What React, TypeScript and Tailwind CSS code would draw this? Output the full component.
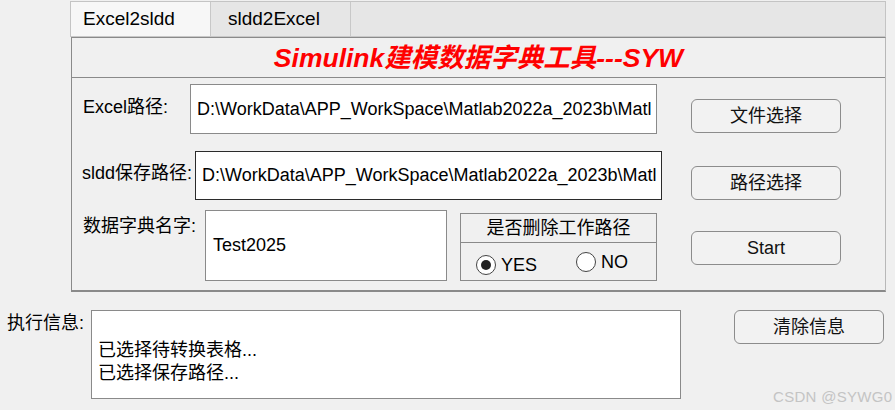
import React from "react";

const F = { fontFamily: '"Liberation Sans", "Noto Sans CJK SC", sans-serif' };

function Btn({ children, className = "" }: { children: React.ReactNode; className?: string }) {
  return (
    <div
      className={
        "w-[150px] flex items-center justify-center rounded-[6px] border border-[#8c8c8c] bg-[#f2f2f2] text-[18px] text-[#111] " +
        className
      }
    >
      {children}
    </div>
  );
}

function Field({ children, className = "" }: { children: React.ReactNode; className?: string }) {
  return (
    <div
      className={
        "bg-white flex items-center overflow-hidden whitespace-nowrap text-[18px] text-black " + className
      }
    >
      {children}
    </div>
  );
}

export default function App() {
  return (
    <div className="w-[895px] h-[410px] bg-[#f0f0f0] relative overflow-hidden text-black" style={F}>
      {/* Tab group */}
      <div className="ml-[70px] pt-[1px] w-[816px]">
        <div className="h-[36px] bg-[#e6e6e6] border-t border-l border-r border-[#c4c4c4] flex border-b border-b-[#c8c8c8]">
          <div className="w-[140px] h-full bg-[#f7f7f7] border-r border-[#c8c8c8] flex items-center pl-[12px] text-[19px]">
            Excel2sldd
          </div>
          <div className="w-[140px] h-full border-r border-[#c8c8c8] flex items-center pl-[17px] text-[19px]">
            sldd2Excel
          </div>
        </div>
        <div className="h-[255px] border-t border-l border-b-2 border-[#8a8a8a] border-r border-r-[#b8b8b8] ml-[1px]">
          <div className="h-[40px] border-b border-[#8a8a8a] flex items-center justify-center">
            <span className="text-[#ff0000] font-bold italic text-[26.5px] leading-[30px]">
              Simulink建模数据字典工具---SYW
            </span>
          </div>
          {/* Row 1 */}
          <div className="flex items-start mt-[6px]">
            <div className="w-[118px] pl-[11px] pt-[13px] text-[18px] leading-[20px]">Excel路径:</div>
            <Field className="w-[467px] h-[50px] border border-[#8a8a8a] pl-[6px]">
              D:\WorkData\APP_WorkSpace\Matlab2022a_2023b\Matl
            </Field>
            <Btn className="ml-[34px] mt-[15px] h-[34px]">文件选择</Btn>
          </div>
          {/* Row 2 */}
          <div className="flex items-start mt-[17px]">
            <div className="w-[123px] pl-[10px] pt-[12px] text-[18px] leading-[20px]">sldd保存路径:</div>
            <Field className="w-[467px] h-[49px] border border-[#2b2b2b] pl-[6px]">
              D:\WorkData\APP_WorkSpace\Matlab2022a_2023b\Matl
            </Field>
            <Btn className="ml-[29px] mt-[15px] h-[34px]">路径选择</Btn>
          </div>
          {/* Row 3 */}
          <div className="flex items-start mt-[10px]">
            <div className="w-[133px] pl-[11px] pt-[6px] text-[18px] leading-[20px]">数据字典名字:</div>
            <Field className="w-[242px] h-[71px] border border-[#8a8a8a] pl-[7px]">Test2025</Field>
            <div className="ml-[13px] mt-[3px] w-[197px] h-[68px] border border-[#8a8a8a] flex flex-col">
              <div className="h-[29px] border-b border-[#8a8a8a] flex items-center justify-center text-[18px]">
                是否删除工作路径
              </div>
              <div className="flex-1 flex items-start text-[18px]">
                <div className="flex items-center ml-[15px] mt-[12px]">
                  <div className="w-[20px] h-[20px] rounded-full border border-[#444] bg-white flex items-center justify-center">
                    <div className="w-[10px] h-[10px] rounded-full bg-[#222]" />
                  </div>
                  <span className="ml-[5px] leading-[20px]">YES</span>
                </div>
                <div className="flex items-center ml-[39px] mt-[9px]">
                  <div className="w-[20px] h-[20px] rounded-full border border-[#444] bg-white" />
                  <span className="ml-[5px] leading-[20px]">NO</span>
                </div>
              </div>
            </div>
            <Btn className="ml-[34px] mt-[21px] h-[34px]">Start</Btn>
          </div>
        </div>
      </div>
      {/* Bottom */}
      <div className="flex items-start mt-[18px]">
        <div className="w-[91px] pl-[7px] pt-[3px] text-[18px] leading-[20px]">执行信息:</div>
        <div className="w-[590px] h-[89px] bg-white border border-[#8a8a8a] pl-[6px] pt-[5px] text-[18px] leading-[23px]">
          <div className="h-[23px]" />
          <div>已选择待转换表格...</div>
          <div>已选择保存路径...</div>
        </div>
        <Btn className="ml-[53px] h-[34px]">清除信息</Btn>
      </div>
      <div className="absolute left-[773px] top-[386px] text-[15px] text-[#c4c4c4] tracking-[0.3px]">CSDN @SYWG0</div>
    </div>
  );
}
